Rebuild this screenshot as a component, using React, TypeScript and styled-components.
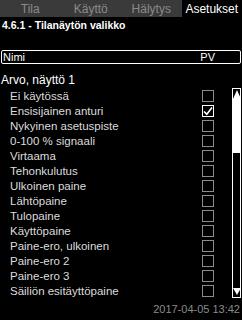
import styled, { createGlobalStyle } from "styled-components";

const GlobalStyle = createGlobalStyle`
  html, body {
    margin: 0;
    padding: 0;
    background: #000;
  }
  body {
    font-family: "Liberation Sans", Arial, sans-serif;
    color: #fff;
  }
`;

const tabs = ["Tila", "Käyttö", "Hälytys", "Asetukset"];

const items = [
  { label: "Ei käytössä", checked: false },
  { label: "Ensisijainen anturi", checked: true },
  { label: "Nykyinen asetuspiste", checked: false },
  { label: "0-100 % signaali", checked: false },
  { label: "Virtaama", checked: false },
  { label: "Tehonkulutus", checked: false },
  { label: "Ulkoinen paine", checked: false },
  { label: "Lähtöpaine", checked: false },
  { label: "Tulopaine", checked: false },
  { label: "Käyttöpaine", checked: false },
  { label: "Paine-ero, ulkoinen", checked: false },
  { label: "Paine-ero 2", checked: false },
  { label: "Paine-ero 3", checked: false },
  { label: "Säiliön esitäyttöpaine", checked: false },
];

export default function App() {
  return (
    <Screen>
      <GlobalStyle />
      <TabBar>
        {tabs.map((t, i) => (
          <Tab key={t} $active={i === 3}>
            {t}
          </Tab>
        ))}
      </TabBar>
      <Title>4.6.1 - Tilanäytön valikko</Title>
      <HeaderBox>
        <span>Nimi</span>
        <span>PV</span>
      </HeaderBox>
      <GroupLabel>Arvo, näyttö 1</GroupLabel>
      <ListArea>
        <List>
          {items.map((item) => (
            <Row key={item.label}>
              <RowLabel>{item.label}</RowLabel>
              <Check $checked={item.checked}>
                {item.checked && (
                  <svg width="10" height="10" viewBox="0 0 10 10">
                    <path
                      d="M1 5.5 L3.8 8.2 L9 1.5"
                      stroke="#fff"
                      strokeWidth="1.6"
                      fill="none"
                    />
                  </svg>
                )}
              </Check>
            </Row>
          ))}
        </List>
        <ScrollBar>
          <Thumb>
            <svg width="8" height="9" viewBox="0 0 8 9">
              <path d="M4 0 L8 9 L0 9 Z" fill="#fff" />
            </svg>
            <ThumbBody />
          </Thumb>
          <DownArrow>
            <svg width="8" height="7" viewBox="0 0 8 7">
              <path d="M0 0 L8 0 L4 7 Z" fill="#fff" />
            </svg>
          </DownArrow>
        </ScrollBar>
      </ListArea>
      <Footer>2017-04-05 13:42</Footer>
    </Screen>
  );
}

const Screen = styled.div`
  width: 242px;
  height: 320px;
  background: #000;
  display: flex;
  flex-direction: column;
  overflow: hidden;
`;

const TabBar = styled.div`
  display: grid;
  grid-template-columns: repeat(4, 1fr);
  height: 17px;
  background: #3a3a3a;
`;

const Tab = styled.div<{ $active?: boolean }>`
  display: flex;
  align-items: center;
  justify-content: center;
  font-size: 12px;
  color: ${(p) => (p.$active ? "#fff" : "#8a8a8a")};
  background: ${(p) => (p.$active ? "#000" : "transparent")};
`;

const Title = styled.div`
  height: 16px;
  line-height: 16px;
  padding-left: 2px;
  font-size: 10.5px;
  font-weight: bold;
  color: #fff;
`;

const HeaderBox = styled.div`
  margin: 17px 1px 0 1px;
  height: 12px;
  border: 1px solid #fff;
  border-radius: 2px;
  display: flex;
  justify-content: space-between;
  align-items: center;
  padding: 0 25px 0 1px;
  font-size: 11px;
  color: #fff;
`;

const GroupLabel = styled.div`
  margin-top: 8px;
  height: 16px;
  line-height: 16px;
  padding-left: 1px;
  font-size: 12px;
  color: #fff;
`;

const ListArea = styled.div`
  display: flex;
  height: 210px;
`;

const List = styled.div`
  flex: 1;
  display: flex;
  flex-direction: column;
`;

const Row = styled.div`
  height: 15px;
  display: flex;
  align-items: center;
  padding-left: 10px;
  padding-right: 18px;
`;

const RowLabel = styled.span`
  flex: 1;
  font-size: 11.5px;
  color: #dcdcdc;
  white-space: nowrap;
`;

const Check = styled.div<{ $checked?: boolean }>`
  width: 10px;
  height: 10px;
  border: 1px solid ${(p) => (p.$checked ? "#fff" : "#8c8c8c")};
  display: flex;
  align-items: center;
  justify-content: center;
`;

const ScrollBar = styled.div`
  width: 9px;
  margin-right: 1px;
  border: 1px solid #fff;
  display: flex;
  flex-direction: column;
  justify-content: space-between;
  align-items: center;
  padding: 1px 0 2px;
  box-sizing: border-box;
`;

const Thumb = styled.div`
  display: flex;
  flex-direction: column;
  align-items: center;
  width: 7px;
`;

const ThumbBody = styled.div`
  width: 7px;
  height: 54px;
  background: #fff;
`;

const DownArrow = styled.div`
  display: flex;
`;

const Footer = styled.div`
  flex: 1;
  display: flex;
  align-items: center;
  justify-content: flex-end;
  padding-right: 2px;
  font-size: 11px;
  color: #8a8a8a;
`;
